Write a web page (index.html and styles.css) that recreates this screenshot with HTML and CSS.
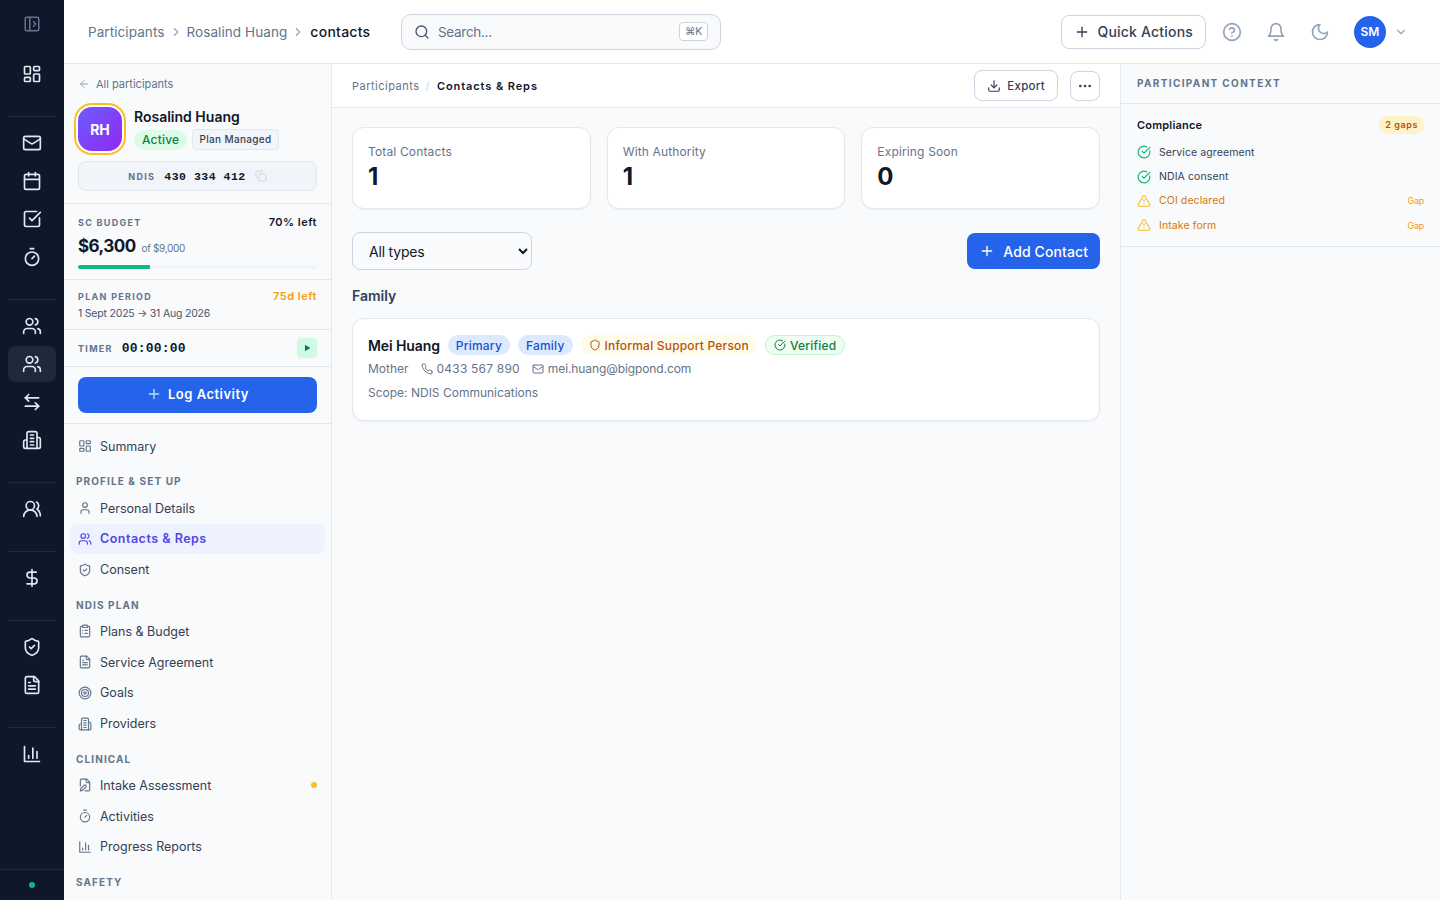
FILE: index.html
```html
<!DOCTYPE html>
<html lang="en">
<head>
    <meta charset="UTF-8">
    <meta name="viewport" content="width=device-width, initial-scale=1.0">
    <title>Contacts &amp; Reps</title>
    <link rel="stylesheet" href="styles.css">
</head>
<body>

    <svg class="sprite" xmlns="http://www.w3.org/2000/svg">
        <symbol id="i-panel" viewBox="0 0 24 24"><rect width="18" height="18" x="3" y="3" rx="2"/><path d="M9 3v18"/><path d="m14 9 3 3-3 3"/></symbol>
        <symbol id="i-dash" viewBox="0 0 24 24"><rect width="7" height="9" x="3" y="3" rx="1"/><rect width="7" height="5" x="14" y="3" rx="1"/><rect width="7" height="9" x="14" y="12" rx="1"/><rect width="7" height="5" x="3" y="16" rx="1"/></symbol>
        <symbol id="i-mail" viewBox="0 0 24 24"><rect width="20" height="16" x="2" y="4" rx="2"/><path d="m22 7-8.97 5.7a1.94 1.94 0 0 1-2.06 0L2 7"/></symbol>
        <symbol id="i-cal" viewBox="0 0 24 24"><path d="M8 2v4"/><path d="M16 2v4"/><rect width="18" height="18" x="3" y="4" rx="2"/><path d="M3 10h18"/></symbol>
        <symbol id="i-task" viewBox="0 0 24 24"><path d="M21 10.5V19a2 2 0 0 1-2 2H5a2 2 0 0 1-2-2V5a2 2 0 0 1 2-2h12.5"/><path d="m9 11 3 3L22 4"/></symbol>
        <symbol id="i-timer" viewBox="0 0 24 24"><path d="M10 2h4"/><path d="m12 14 3-3"/><circle cx="12" cy="14" r="8"/></symbol>
        <symbol id="i-users" viewBox="0 0 24 24"><path d="M16 21v-2a4 4 0 0 0-4-4H6a4 4 0 0 0-4 4v2"/><circle cx="9" cy="7" r="4"/><path d="M22 21v-2a4 4 0 0 0-3-3.87"/><path d="M16 3.13a4 4 0 0 1 0 7.75"/></symbol>
        <symbol id="i-swap" viewBox="0 0 24 24"><path d="M8 3 4 7l4 4"/><path d="M4 7h16"/><path d="m16 21 4-4-4-4"/><path d="M20 17H4"/></symbol>
        <symbol id="i-build" viewBox="0 0 24 24"><path d="M6 22V4a2 2 0 0 1 2-2h8a2 2 0 0 1 2 2v18Z"/><path d="M6 12H4a2 2 0 0 0-2 2v6a2 2 0 0 0 2 2h2"/><path d="M18 9h2a2 2 0 0 1 2 2v9a2 2 0 0 1-2 2h-2"/><path d="M10 6h4"/><path d="M10 10h4"/><path d="M10 14h4"/><path d="M10 18h4"/></symbol>
        <symbol id="i-round" viewBox="0 0 24 24"><path d="M18 21a8 8 0 0 0-16 0"/><circle cx="10" cy="8" r="5"/><path d="M22 20c0-3.37-2-6.5-4-8a5 5 0 0 0-.45-8.3"/></symbol>
        <symbol id="i-dollar" viewBox="0 0 24 24"><path d="M12 2v20"/><path d="M17 5H9.5a3.5 3.5 0 0 0 0 7h5a3.5 3.5 0 0 1 0 7H6"/></symbol>
        <symbol id="i-shieldc" viewBox="0 0 24 24"><path d="M20 13c0 5-3.5 7.5-7.66 8.95a1 1 0 0 1-.67-.01C7.5 20.5 4 18 4 13V6a1 1 0 0 1 1-1c2 0 4.5-1.2 6.24-2.72a1.17 1.17 0 0 1 1.52 0C14.51 3.81 17 5 19 5a1 1 0 0 1 1 1z"/><path d="m9 12 2 2 4-4"/></symbol>
        <symbol id="i-shield" viewBox="0 0 24 24"><path d="M20 13c0 5-3.5 7.5-7.66 8.95a1 1 0 0 1-.67-.01C7.5 20.5 4 18 4 13V6a1 1 0 0 1 1-1c2 0 4.5-1.2 6.24-2.72a1.17 1.17 0 0 1 1.52 0C14.51 3.81 17 5 19 5a1 1 0 0 1 1 1z"/></symbol>
        <symbol id="i-file" viewBox="0 0 24 24"><path d="M15 2H6a2 2 0 0 0-2 2v16a2 2 0 0 0 2 2h12a2 2 0 0 0 2-2V7Z"/><path d="M14 2v4a2 2 0 0 0 2 2h4"/><path d="M10 9H8"/><path d="M16 13H8"/><path d="M16 17H8"/></symbol>
        <symbol id="i-chart" viewBox="0 0 24 24"><path d="M3 3v18h18"/><path d="M18 17V9"/><path d="M13 17V5"/><path d="M8 17v-3"/></symbol>
        <symbol id="i-user" viewBox="0 0 24 24"><path d="M19 21v-2a4 4 0 0 0-4-4H9a4 4 0 0 0-4 4v2"/><circle cx="12" cy="7" r="4"/></symbol>
        <symbol id="i-clip" viewBox="0 0 24 24"><rect width="8" height="4" x="8" y="2" rx="1"/><path d="M16 4h2a2 2 0 0 1 2 2v14a2 2 0 0 1-2 2H6a2 2 0 0 1-2-2V6a2 2 0 0 1 2-2h2"/><path d="M12 11h4"/><path d="M12 16h4"/><path d="M8 11h.01"/><path d="M8 16h.01"/></symbol>
        <symbol id="i-target" viewBox="0 0 24 24"><circle cx="12" cy="12" r="10"/><circle cx="12" cy="12" r="6"/><circle cx="12" cy="12" r="2"/></symbol>
        <symbol id="i-pen" viewBox="0 0 24 24"><path d="M12.5 22H18a2 2 0 0 0 2-2V7l-5-5H6a2 2 0 0 0-2 2v9.5"/><path d="M14 2v4a2 2 0 0 0 2 2h4"/><path d="M13.378 15.626a1 1 0 1 0-3.004-3.004l-5.01 5.012a2 2 0 0 0-.506.854l-.837 2.87a.5.5 0 0 0 .62.62l2.87-.837a2 2 0 0 0 .854-.506z"/></symbol>
        <symbol id="i-copy" viewBox="0 0 24 24"><rect width="14" height="14" x="8" y="8" rx="2"/><path d="M4 16c-1.1 0-2-.9-2-2V4c0-1.1.9-2 2-2h10c1.1 0 2 .9 2 2"/></symbol>
        <symbol id="i-search" viewBox="0 0 24 24"><circle cx="11" cy="11" r="8"/><path d="m21 21-4.3-4.3"/></symbol>
        <symbol id="i-help" viewBox="0 0 24 24"><circle cx="12" cy="12" r="10"/><path d="M9.09 9a3 3 0 0 1 5.83 1c0 2-3 3-3 3"/><path d="M12 17h.01"/></symbol>
        <symbol id="i-bell" viewBox="0 0 24 24"><path d="M6 8a6 6 0 0 1 12 0c0 7 3 9 3 9H3s3-2 3-9"/><path d="M10.3 21a1.94 1.94 0 0 0 3.4 0"/></symbol>
        <symbol id="i-moon" viewBox="0 0 24 24"><path d="M12 3a6 6 0 0 0 9 9 9 9 0 1 1-9-9Z"/></symbol>
        <symbol id="i-down" viewBox="0 0 24 24"><path d="m6 9 6 6 6-6"/></symbol>
        <symbol id="i-right" viewBox="0 0 24 24"><path d="m9 18 6-6-6-6"/></symbol>
        <symbol id="i-back" viewBox="0 0 24 24"><path d="m12 19-7-7 7-7"/><path d="M19 12H5"/></symbol>
        <symbol id="i-plus" viewBox="0 0 24 24"><path d="M5 12h14"/><path d="M12 5v14"/></symbol>
        <symbol id="i-export" viewBox="0 0 24 24"><path d="M21 15v4a2 2 0 0 1-2 2H5a2 2 0 0 1-2-2v-4"/><path d="m7 10 5 5 5-5"/><path d="M12 15V3"/></symbol>
        <symbol id="i-more" viewBox="0 0 24 24"><circle cx="5" cy="12" r="1"/><circle cx="12" cy="12" r="1"/><circle cx="19" cy="12" r="1"/></symbol>
        <symbol id="i-phone" viewBox="0 0 24 24"><path d="M22 16.92v3a2 2 0 0 1-2.18 2 19.79 19.79 0 0 1-8.63-3.07 19.5 19.5 0 0 1-6-6 19.79 19.79 0 0 1-3.07-8.67A2 2 0 0 1 4.11 2h3a2 2 0 0 1 2 1.72 12.84 12.84 0 0 0 .7 2.81 2 2 0 0 1-.45 2.11L8.09 9.91a16 16 0 0 0 6 6l1.27-1.27a2 2 0 0 1 2.11-.45 12.84 12.84 0 0 0 2.81.7A2 2 0 0 1 22 16.92z"/></symbol>
        <symbol id="i-ok" viewBox="0 0 24 24"><path d="M21.801 10A10 10 0 1 1 17 3.335"/><path d="m9 11 3 3L22 4"/></symbol>
        <symbol id="i-warn" viewBox="0 0 24 24"><path d="m21.73 18-8-14a2 2 0 0 0-3.48 0l-8 14A2 2 0 0 0 4 21h16a2 2 0 0 0 1.73-3"/><path d="M12 9v4"/><path d="M12 17h.01"/></symbol>
    </svg>

    <div class="app">

        <nav class="rail">
            <div class="rail-top"><svg class="ic-18 dim"><use href="#i-panel"/></svg></div>
            <div class="rail-group">
                <a class="rail-item"><svg class="ic-20"><use href="#i-dash"/></svg></a>
            </div>
            <div class="rail-group">
                <a class="rail-item"><svg class="ic-20"><use href="#i-mail"/></svg></a>
                <a class="rail-item"><svg class="ic-20"><use href="#i-cal"/></svg></a>
                <a class="rail-item"><svg class="ic-20"><use href="#i-task"/></svg></a>
                <a class="rail-item"><svg class="ic-20"><use href="#i-timer"/></svg></a>
            </div>
            <div class="rail-group">
                <a class="rail-item"><svg class="ic-20"><use href="#i-users"/></svg></a>
                <a class="rail-item active"><svg class="ic-20"><use href="#i-users"/></svg></a>
                <a class="rail-item"><svg class="ic-20"><use href="#i-swap"/></svg></a>
                <a class="rail-item"><svg class="ic-20"><use href="#i-build"/></svg></a>
            </div>
            <div class="rail-group">
                <a class="rail-item"><svg class="ic-20"><use href="#i-round"/></svg></a>
            </div>
            <div class="rail-group">
                <a class="rail-item"><svg class="ic-20"><use href="#i-dollar"/></svg></a>
            </div>
            <div class="rail-group">
                <a class="rail-item"><svg class="ic-20"><use href="#i-shieldc"/></svg></a>
                <a class="rail-item"><svg class="ic-20"><use href="#i-file"/></svg></a>
            </div>
            <div class="rail-group last">
                <a class="rail-item"><svg class="ic-20"><use href="#i-chart"/></svg></a>
            </div>
            <div class="rail-foot"><span class="status-dot"></span></div>
        </nav>

        <div class="main">

            <header class="topbar">
                <div class="crumbs">
                    <span>Participants</span>
                    <svg class="ic-14"><use href="#i-right"/></svg>
                    <span>Rosalind Huang</span>
                    <svg class="ic-14"><use href="#i-right"/></svg>
                    <span class="crumb-current">contacts</span>
                </div>
                <div class="search">
                    <svg class="ic-16"><use href="#i-search"/></svg>
                    <span class="search-text">Search...</span>
                    <span class="kbd">⌘K</span>
                </div>
                <div class="top-actions">
                    <button class="quick-btn"><svg class="ic-16"><use href="#i-plus"/></svg>Quick Actions</button>
                    <svg class="ic-20 top-icon"><use href="#i-help"/></svg>
                    <svg class="ic-20 top-icon"><use href="#i-bell"/></svg>
                    <svg class="ic-20 top-icon"><use href="#i-moon"/></svg>
                    <div class="user-menu">
                        <span class="user-avatar">SM</span>
                        <svg class="ic-14"><use href="#i-down"/></svg>
                    </div>
                </div>
            </header>

            <div class="workspace">

                <aside class="sidebar">
                    <div class="profile">
                        <a class="back-link"><svg class="ic-12"><use href="#i-back"/></svg>All participants</a>
                        <div class="profile-row">
                            <div class="avatar">RH</div>
                            <div>
                                <div class="profile-name">Rosalind Huang</div>
                                <div class="profile-tags">
                                    <span class="tag-active">Active</span>
                                    <span class="tag-plan">Plan Managed</span>
                                </div>
                            </div>
                        </div>
                        <div class="ndis-box">
                            <span class="mini-label">NDIS</span>
                            <span class="ndis-num">430 334 412</span>
                            <svg class="ic-12"><use href="#i-copy"/></svg>
                        </div>
                    </div>

                    <div class="budget">
                        <div class="side-row">
                            <span class="mini-label">SC BUDGET</span>
                            <span class="budget-left">70% left</span>
                        </div>
                        <div class="budget-figures">
                            <span class="budget-amount">$6,300</span>
                            <span class="budget-of">of $9,000</span>
                        </div>
                        <div class="bar"><div class="bar-fill" style="width: 30%"></div></div>
                    </div>

                    <div class="period">
                        <div class="side-row">
                            <span class="mini-label">PLAN PERIOD</span>
                            <span class="period-left">75d left</span>
                        </div>
                        <div class="period-dates">1 Sept 2025 → 31 Aug 2026</div>
                    </div>

                    <div class="timer">
                        <span class="mini-label">TIMER</span>
                        <span class="timer-value">00:00:00</span>
                        <span class="play"><svg viewBox="0 0 24 24"><path d="M7 4l13 8-13 8z"/></svg></span>
                    </div>

                    <div class="log-wrap">
                        <button class="log-btn"><svg class="ic-16"><use href="#i-plus"/></svg>Log Activity</button>
                    </div>

                    <div class="side-nav">
                        <a class="nav-item"><svg class="ic-14"><use href="#i-dash"/></svg>Summary</a>
                        <div class="nav-heading">PROFILE &amp; SET UP</div>
                        <a class="nav-item"><svg class="ic-14"><use href="#i-user"/></svg>Personal Details</a>
                        <a class="nav-item active"><svg class="ic-14"><use href="#i-users"/></svg>Contacts &amp; Reps</a>
                        <a class="nav-item"><svg class="ic-14"><use href="#i-shieldc"/></svg>Consent</a>
                        <div class="nav-heading">NDIS PLAN</div>
                        <a class="nav-item"><svg class="ic-14"><use href="#i-clip"/></svg>Plans &amp; Budget</a>
                        <a class="nav-item"><svg class="ic-14"><use href="#i-file"/></svg>Service Agreement</a>
                        <a class="nav-item"><svg class="ic-14"><use href="#i-target"/></svg>Goals</a>
                        <a class="nav-item"><svg class="ic-14"><use href="#i-build"/></svg>Providers</a>
                        <div class="nav-heading">CLINICAL</div>
                        <a class="nav-item"><svg class="ic-14"><use href="#i-pen"/></svg>Intake Assessment<span class="nav-dot"></span></a>
                        <a class="nav-item"><svg class="ic-14"><use href="#i-timer"/></svg>Activities</a>
                        <a class="nav-item"><svg class="ic-14"><use href="#i-chart"/></svg>Progress Reports</a>
                        <div class="nav-heading">SAFETY</div>
                    </div>
                </aside>

                <main class="content">
                    <div class="content-head">
                        <div class="sub-crumbs">
                            <span>Participants</span>
                            <span class="slash">/</span>
                            <span class="sub-current">Contacts &amp; Reps</span>
                        </div>
                        <div class="head-actions">
                            <button class="export-btn"><svg class="ic-14"><use href="#i-export"/></svg>Export</button>
                            <button class="more-btn"><svg class="ic-16"><use href="#i-more"/></svg></button>
                        </div>
                    </div>

                    <div class="content-body">
                        <div class="stats">
                            <div class="stat-card"><div class="stat-label">Total Contacts</div><div class="stat-value">1</div></div>
                            <div class="stat-card"><div class="stat-label">With Authority</div><div class="stat-value">1</div></div>
                            <div class="stat-card"><div class="stat-label">Expiring Soon</div><div class="stat-value">0</div></div>
                        </div>

                        <div class="filter-row">
                            <select class="type-select"><option>All types</option></select>
                            <button class="add-btn"><svg class="ic-16"><use href="#i-plus"/></svg>Add Contact</button>
                        </div>

                        <h3 class="group-title">Family</h3>

                        <div class="contact-card">
                            <div class="contact-top">
                                <span class="contact-name">Mei Huang</span>
                                <span class="pill pill-blue">Primary</span>
                                <span class="pill pill-blue">Family</span>
                                <span class="pill pill-amber"><svg class="ic-12"><use href="#i-shield"/></svg>Informal Support Person</span>
                                <span class="pill pill-green"><svg class="ic-12"><use href="#i-ok"/></svg>Verified</span>
                            </div>
                            <div class="contact-meta">
                                <span>Mother</span>
                                <span class="meta-item phone"><svg class="ic-12"><use href="#i-phone"/></svg>0433 567 890</span>
                                <span class="meta-item email"><svg class="ic-12"><use href="#i-mail"/></svg>mei.huang@bigpond.com</span>
                            </div>
                            <div class="contact-scope">Scope: NDIS Communications</div>
                        </div>
                    </div>
                </main>

                <aside class="context">
                    <div class="context-head">PARTICIPANT CONTEXT</div>
                    <div class="compliance">
                        <div class="compliance-head">
                            <span class="compliance-title">Compliance</span>
                            <span class="gaps">2 gaps</span>
                        </div>
                        <div class="check-row ok"><svg class="ic-14"><use href="#i-ok"/></svg>Service agreement</div>
                        <div class="check-row ok"><svg class="ic-14"><use href="#i-ok"/></svg>NDIA consent</div>
                        <div class="check-row gap"><svg class="ic-14"><use href="#i-warn"/></svg>COI declared<span class="gap-note">Gap</span></div>
                        <div class="check-row gap"><svg class="ic-14"><use href="#i-warn"/></svg>Intake form<span class="gap-note">Gap</span></div>
                    </div>
                </aside>

            </div>
        </div>
    </div>

</body>
</html>
```

FILE: styles.css
```css
* { box-sizing: border-box; }
html, body { height: 100%; }
body { margin: 0; font-family: Inter, "Liberation Sans", sans-serif; color: #0f172a; background: #f8fafc; overflow: hidden; }
button, select { font-family: inherit; }
svg { flex-shrink: 0; fill: none; stroke: currentColor; stroke-width: 2; stroke-linecap: round; stroke-linejoin: round; }
.sprite { display: none; }

.ic-12 { width: 12px; height: 12px; }
.ic-14 { width: 14px; height: 14px; }
.ic-16 { width: 16px; height: 16px; }
.ic-18 { width: 18px; height: 18px; }
.ic-20 { width: 20px; height: 20px; }

.app { display: flex; height: 900px; }

/* left rail */
.rail { width: 64px; flex-shrink: 0; background: #0f172a; display: flex; flex-direction: column; color: #e2e8f0; }
.rail-top { height: 48px; display: flex; align-items: center; justify-content: center; }
.rail-top .dim { color: #64748b; }
.rail-group { display: flex; flex-direction: column; gap: 2px; margin: 0 8px; padding: 8px 0 24px; border-bottom: 1px solid #1e293b; }
.rail-group.last { border-bottom: none; }
.rail-item { height: 36px; border-radius: 8px; display: flex; align-items: center; justify-content: center; }
.rail-item.active { background: #1e293b; }
.rail-foot { margin-top: auto; height: 31px; border-top: 1px solid #1e293b; display: flex; align-items: center; justify-content: center; }
.status-dot { width: 6px; height: 6px; border-radius: 50%; background: #10b981; }

.main { flex: 1; min-width: 0; display: flex; flex-direction: column; }

/* top bar */
.topbar { height: 64px; flex-shrink: 0; background: #fff; border-bottom: 1px solid #e2e8f0; display: flex; align-items: center; padding: 0 32px 0 24px; }
.crumbs { display: flex; align-items: center; gap: 4px; width: 313px; font-size: 13.5px; letter-spacing: 0.08px; color: #64748b; }
.crumbs svg { color: #94a3b8; }
.crumb-current { color: #0f172a; font-size: 14px; font-weight: 500; letter-spacing: 0.25px; margin-left: 1px; }
.search { width: 320px; height: 36px; display: flex; align-items: center; gap: 8px; padding: 0 12px; background: #f8fafc; border: 1px solid #cbd5e1; border-radius: 10px; color: #475569; font-size: 13.5px; }
.search-text { flex: 1; color: #64748b; letter-spacing: -0.3px; }
.kbd { font-size: 10.5px; padding: 2px 5px; background: #fff; border: 1px solid #cbd5e1; border-radius: 4px; color: #64748b; letter-spacing: -0.3px; }
.top-actions { margin-left: auto; display: flex; align-items: center; gap: 24px; color: #94a3b8; }
.quick-btn { height: 34px; display: flex; align-items: center; gap: 7px; padding: 0 12px; background: #fff; border: 1px solid #cbd5e1; border-radius: 8px; color: #334155; font-size: 14px; font-weight: 500; letter-spacing: 0.2px; margin-right: -8px; }
.user-menu { display: flex; align-items: center; gap: 8px; }
.user-avatar { width: 32px; height: 32px; border-radius: 50%; background: #2563eb; color: #fff; font-size: 12px; font-weight: 600; display: flex; align-items: center; justify-content: center; }

.workspace { flex: 1; min-height: 0; display: flex; }

/* participant sidebar */
.sidebar { width: 268px; flex-shrink: 0; background: #f8fafc; border-right: 1px solid #e2e8f0; overflow: hidden; }
.profile { height: 140px; padding: 13px 14px 0; border-bottom: 1px solid #e2e8f0; }
.back-link { display: flex; align-items: center; gap: 6px; font-size: 11px; color: #64748b; height: 14px; }
.back-link svg { color: #94a3b8; }
.profile-row { display: flex; align-items: center; gap: 12px; margin-top: 12px; height: 52px; }
.avatar { width: 44px; height: 44px; border-radius: 14px; background: linear-gradient(135deg, #6d5efc, #9227f5); color: #fff; font-size: 14px; font-weight: 700; display: flex; align-items: center; justify-content: center; box-shadow: 0 0 0 2px #fff, 0 0 0 4px #fbbf24; }
.profile-name { font-size: 14px; font-weight: 600; color: #0f172a; line-height: 18px; }
.profile-tags { display: flex; align-items: center; gap: 5px; margin-top: 3px; }
.tag-active { background: #dcfce7; color: #15803d; font-size: 12px; font-weight: 500; padding: 2px 8px; border-radius: 10px; line-height: 16px; letter-spacing: 0.2px; }
.tag-plan { background: #f1f5f9; color: #334155; border: 1px solid #e2e8f0; font-size: 10px; font-weight: 500; padding: 2px 6px; border-radius: 4px; line-height: 15px; letter-spacing: 0.35px; }
.ndis-box { margin-top: 6px; height: 30px; display: flex; align-items: center; justify-content: center; gap: 9px; background: #f1f5f9; border: 1px solid #e2e8f0; border-radius: 8px; }
.ndis-box svg { color: #cbd5e1; }
.mini-label { font-size: 9px; font-weight: 700; letter-spacing: 1.3px; color: #64748b; }
.ndis-num { font-family: "Liberation Mono", monospace; font-size: 11.5px; font-weight: 700; letter-spacing: 0.5px; color: #0f172a; }

.side-row { display: flex; justify-content: space-between; align-items: center; }
.budget { height: 76px; padding: 11px 14px 0; border-bottom: 1px solid #e2e8f0; }
.budget-left { font-size: 11px; font-weight: 600; color: #0f172a; letter-spacing: 0.5px; }
.budget-figures { display: flex; align-items: baseline; gap: 6px; margin-top: 7px; }
.budget-amount { font-size: 17px; font-weight: 700; color: #0f172a; letter-spacing: -0.55px; }
.budget-of { font-size: 10px; color: #64748b; letter-spacing: -0.35px; }
.bar { height: 4px; margin-top: 9px; background: #f1f5f9; border-radius: 2px; overflow: hidden; }
.bar-fill { height: 100%; background: #10b981; }

.period { height: 50px; padding: 9px 14px 0; border-bottom: 1px solid #e2e8f0; }
.period-left { font-size: 11px; font-weight: 600; color: #f59e0b; letter-spacing: 0.5px; }
.period-dates { font-size: 10.5px; color: #475569; margin-top: 4px; letter-spacing: -0.2px; }

.timer { height: 37px; padding: 0 14px; display: flex; align-items: center; gap: 9px; border-bottom: 1px solid #e2e8f0; }
.timer-value { font-family: "Liberation Mono", monospace; font-size: 13px; font-weight: 700; letter-spacing: 0.2px; }
.play { margin-left: auto; width: 20px; height: 20px; border-radius: 4px; background: #d1fae5; display: flex; align-items: center; justify-content: center; color: #047857; }
.play svg { width: 10px; height: 10px; fill: currentColor; stroke: none; }

.log-wrap { height: 57px; padding: 10px 14px 0; border-bottom: 1px solid #e2e8f0; }
.log-btn { width: 100%; height: 36px; border: none; border-radius: 8px; background: #2563eb; color: #fff; font-size: 13px; font-weight: 600; letter-spacing: 0.5px; display: flex; align-items: center; justify-content: center; gap: 6px; padding: 0 0 2px; }
.log-btn svg { color: #bfdbfe; }

.side-nav { padding: 7px 6px; }
.nav-item { display: flex; align-items: center; gap: 8px; height: 30.75px; padding: 0 8px; border-radius: 8px; font-size: 12.5px; color: #334155; }
.nav-item svg { color: #64748b; }
.nav-item.active { background: #eef2ff; color: #4f46e5; font-weight: 600; letter-spacing: 0.5px; }
.nav-item.active svg { color: #4f46e5; }
.nav-dot { margin-left: auto; width: 6px; height: 6px; border-radius: 50%; background: #fbbf24; }
.nav-heading { font-size: 10px; font-weight: 700; letter-spacing: 1.1px; color: #64748b; padding: 0 0 0 6px; margin: 12.5px 0 3.5px; line-height: 15px; }

/* centre column */
.content { flex: 1; min-width: 0; display: flex; flex-direction: column; }
.content-head { height: 44px; background: #fff; border-bottom: 1px solid #e2e8f0; display: flex; align-items: center; justify-content: space-between; padding: 0 20px; flex-shrink: 0; }
.sub-crumbs { display: flex; align-items: center; gap: 6px; font-size: 11px; color: #64748b; letter-spacing: 0.5px; }
.slash { color: #cbd5e1; }
.sub-current { color: #0f172a; font-weight: 600; letter-spacing: 0.9px; margin-left: 1px; }
.head-actions { display: flex; align-items: center; gap: 12px; }
.export-btn { height: 31px; display: flex; align-items: center; gap: 6px; padding: 0 12px; background: #fff; border: 1px solid #cbd5e1; border-radius: 8px; font-size: 11.5px; font-weight: 500; letter-spacing: 0.3px; color: #334155; }
.more-btn { width: 30px; height: 30px; display: flex; align-items: center; justify-content: center; background: #fff; border: 1px solid #cbd5e1; border-radius: 8px; color: #334155; padding: 0; }

.content-body { padding: 19px 20px; }
.stats { display: grid; grid-template-columns: repeat(3, 1fr); gap: 16px; }
.stat-card { height: 82px; background: #fff; border: 1px solid #e2e8f0; border-radius: 12px; padding: 15px; box-shadow: 0 1px 2px rgba(15, 23, 42, 0.05); }
.stat-label { font-size: 12px; color: #64748b; line-height: 16px; letter-spacing: 0.15px; margin-top: 1px; }
.stat-value { font-size: 24px; font-weight: 700; line-height: 32px; color: #0f172a; margin-top: 1px; }
.filter-row { display: flex; justify-content: space-between; align-items: flex-start; margin-top: 23px; }
.type-select { width: 180px; height: 38px; padding: 0 12px; background: #f8fafc; border: 1px solid #cbd5e1; border-radius: 8px; font-size: 14px; letter-spacing: -0.2px; color: #0f172a; }
.add-btn { height: 36px; padding: 0 12px; display: flex; align-items: center; gap: 8px; border: none; border-radius: 8px; background: #2563eb; color: #fff; font-size: 14px; font-weight: 500; letter-spacing: 0.1px; margin-top: 1px; }
.group-title { margin: 16px 0 12px; font-size: 14px; font-weight: 600; color: #334155; line-height: 20px; }

.contact-card { height: 103px; background: #fff; border: 1px solid #e2e8f0; border-radius: 12px; padding: 15px; box-shadow: 0 1px 2px rgba(15, 23, 42, 0.05); }
.contact-top { display: flex; align-items: center; gap: 8px; margin-top: 1px; }
.contact-name { font-size: 14px; font-weight: 600; color: #0f172a; letter-spacing: -0.1px; }
.pill { display: flex; align-items: center; gap: 4px; height: 20px; padding: 0 8px; border-radius: 10px; font-size: 12px; font-weight: 500; letter-spacing: 0.2px; }
.pill-blue { background: #dbeafe; color: #1d4ed8; }
.pill-amber { background: #fffbeb; color: #b45309; }
.pill-green { background: #f0fdf4; color: #15803d; border: 1px solid #bbf7d0; }
.contact-meta { display: flex; align-items: center; gap: 12px; margin-top: 5px; font-size: 12px; color: #64748b; line-height: 18px; }
.meta-item { display: flex; align-items: center; gap: 4px; }
.meta-item.phone { letter-spacing: 0.2px; }
.meta-item.email { letter-spacing: -0.1px; }
.contact-scope { margin-top: 6px; font-size: 12px; color: #64748b; line-height: 18px; }

/* right panel */
.context { width: 320px; flex-shrink: 0; background: #f8fafc; border-left: 1px solid #e2e8f0; }
.context-head { height: 40px; padding: 0 16px 1px; display: flex; align-items: center; font-size: 10px; font-weight: 700; letter-spacing: 1.35px; color: #64748b; border-bottom: 1px solid #e2e8f0; }
.compliance { height: 143px; padding: 11px 16px 0; border-bottom: 1px solid #e2e8f0; }
.compliance-head { display: flex; justify-content: space-between; align-items: center; height: 20px; margin-bottom: 5px; }
.compliance-title { font-size: 11px; font-weight: 600; color: #0f172a; letter-spacing: 0.2px; }
.gaps { font-size: 9px; font-weight: 600; background: #fef3c7; color: #b45309; padding: 2px 6px; border-radius: 9px; line-height: 14px; letter-spacing: 0.6px; }
.check-row { display: flex; align-items: center; gap: 8px; height: 24.4px; font-size: 10.5px; letter-spacing: 0.1px; }
.check-row.ok { color: #334155; }
.check-row.ok svg { color: #10b981; }
.check-row.gap { color: #d97706; }
.check-row.gap svg { color: #fbbf24; }
.gap-note { margin-left: auto; font-size: 9px; color: #f59e0b; letter-spacing: -0.3px; }
```
